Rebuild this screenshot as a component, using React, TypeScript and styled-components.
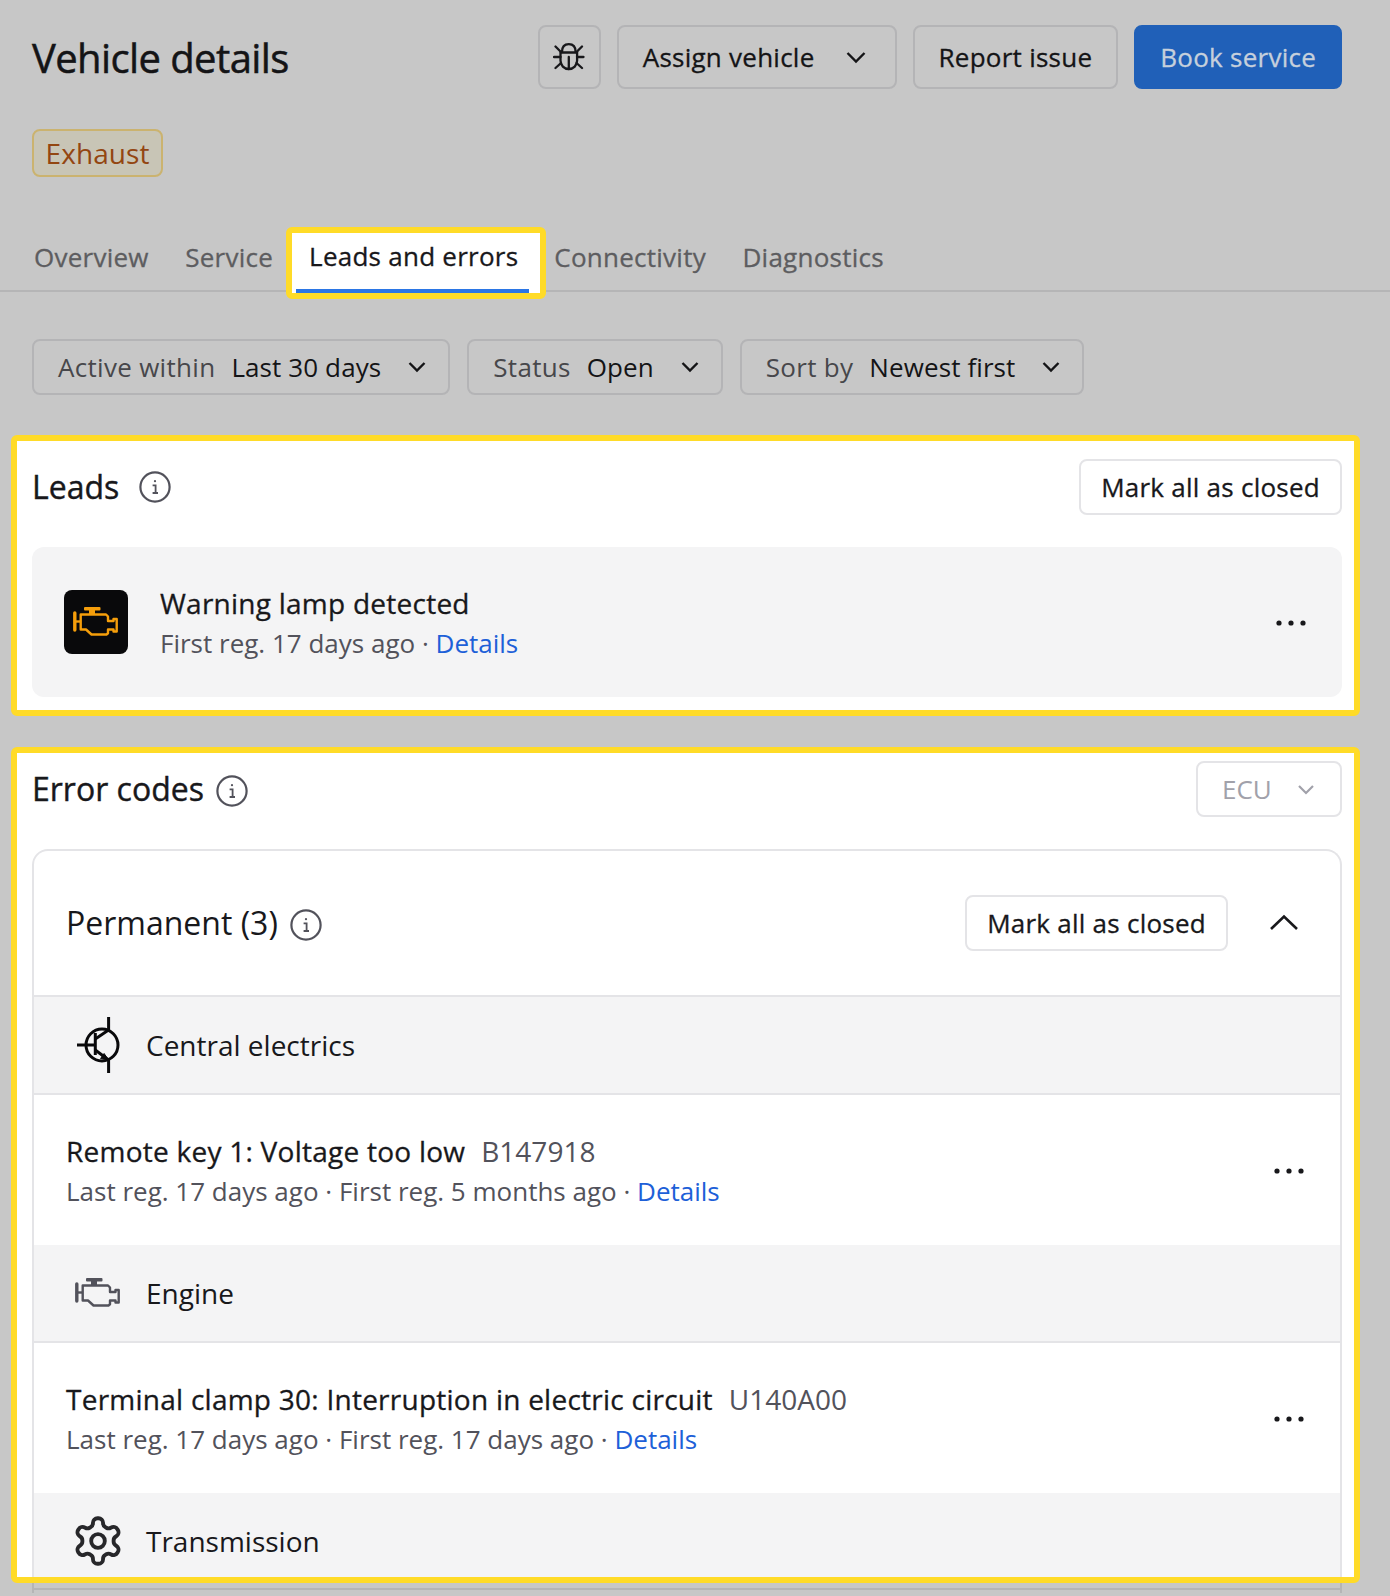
import styled, { createGlobalStyle, css } from "styled-components";

const GlobalStyle = createGlobalStyle`
  html, body {
    margin: 0;
    padding: 0;
    background: #c7c7c7;
    font-family: "Open Sans", "Liberation Sans", sans-serif;
    color: #18181b;
  }
  * { box-sizing: border-box; }
`;

// Open Sans has no medium cut here, so thicken the regular one a little
const medium = css`
  font-weight: 500;
  letter-spacing: 0.25px;
  -webkit-text-stroke: 0.3px;
`;

const Page = styled.div`
  width: 1390px;
  height: 1596px;
  overflow: hidden;
  display: flex;
  flex-direction: column;
`;

const PageHeader = styled.header`
  display: flex;
  align-items: center;
  justify-content: space-between;
  margin: 25px 48px 0 32px;
  height: 64px;
`;

const Title = styled.h1`
  margin: 0;
  font-size: 40px;
  font-weight: 500;
  letter-spacing: -0.6px;
  -webkit-text-stroke: 0.5px;
  color: #141416;
`;

const Actions = styled.div`
  display: flex;
  gap: 16px;
`;

const DimButton = styled.button`
  height: 64px;
  padding: 0 24px;
  display: flex;
  align-items: center;
  font: inherit;
  font-size: 26px;
  ${medium}
  color: #141416;
  background: transparent;
  border: 2px solid #b4b4b6;
  border-radius: 8px;
`;

const BugButton = styled(DimButton)`
  width: 63px;
  padding: 0;
  justify-content: center;
`;

const AssignButton = styled(DimButton)`
  gap: 31px;
  padding-right: 29px;
`;

const PrimaryButton = styled(DimButton)`
  background: #2060b8;
  border-color: #2060b8;
  color: #c6d0dc;
`;

const Tag = styled.span`
  align-self: flex-start;
  margin: 40px 0 0 32px;
  height: 48px;
  padding: 0 11.5px;
  display: flex;
  align-items: center;
  font-size: 28px;
  letter-spacing: 0.1px;
  color: #934611;
  background: #c8c5b6;
  border: 2px solid #cbb36f;
  border-radius: 8px;
`;

const TabBar = styled.nav`
  margin-top: 50px;
  height: 65px;
  display: flex;
  padding-left: 34px;
  border-bottom: 2px solid #b5b5b6;
`;

const Tab = styled.div`
  font-size: 26px;
  ${medium}
  line-height: 61px;
  margin-right: 36.5px;
  color: #5d5d60;
`;

const ActiveTab = styled.div`
  position: relative;
  height: 72px;
  margin: 0 8px 0 -23.5px;
  padding: 0 22px 0 17px;
  font-size: 26px;
  ${medium}
  line-height: 47px;
  color: #18181b;
  background: #fff;
  border: 6px solid #ffdb28;
  border-radius: 6px;
  &::after {
    content: "";
    position: absolute;
    left: 4px;
    right: 11px;
    bottom: 0;
    height: 4px;
    background: #2b76e5;
  }
`;

const Filters = styled.div`
  display: flex;
  gap: 17px;
  margin: 47px 0 0 32px;
`;

const FilterButton = styled(DimButton)`
  height: 56px;
  padding-right: 21px;
  font-weight: 400;
  letter-spacing: 0.1px;
  -webkit-text-stroke: 0;
`;

const FilterLabel = styled.span`
  color: #47474b;
  letter-spacing: 0.3px;
  margin-right: 16px;
`;

const FilterChevron = styled.svg`
  margin-left: 26px;
  width: 20px;
  height: 20px;
  fill: none;
  stroke: currentColor;
  stroke-width: 2.4;
`;

const Section = styled.section<{ $top: number; $height: number }>`
  margin: ${(p) => p.$top}px 30px 0 11px;
  height: ${(p) => p.$height}px;
  padding: 0 12px 0 15px;
  background: #fff;
  border: 6px solid #ffdb28;
  border-radius: 6px;
  overflow: hidden;
`;

const SectionHeader = styled.div<{ $height: number; $lift?: number }>`
  display: flex;
  align-items: center;
  justify-content: space-between;
  height: ${(p) => p.$height}px;
  padding-bottom: ${(p) => p.$lift ?? 0}px;
`;

const HeadingGroup = styled.div`
  display: flex;
  align-items: center;
`;

const Heading = styled.h2`
  margin: 0 0 2px;
  font-size: 32px;
  font-weight: 500;
  -webkit-text-stroke: 0.4px;
  color: #18181b;
`;

const SubHeading = styled.h3`
  margin: 0 0 2px;
  font-size: 32px;
  font-weight: 400;
  color: #18181b;
`;

const InfoIcon = styled.svg<{ $gap: number; $drop: number }>`
  margin-left: ${(p) => p.$gap}px;
  margin-top: ${(p) => p.$drop}px;
  width: 32px;
  height: 32px;
  fill: none;
  stroke: #52525b;
  flex: none;
`;

const OutlineButton = styled.button`
  height: 56px;
  padding: 0 20px;
  font: inherit;
  font-size: 26px;
  ${medium}
  color: #18181b;
  background: #fff;
  border: 2px solid #e4e4e7;
  border-radius: 8px;
`;

const LeadRow = styled.div`
  margin-top: 14px;
  height: 150px;
  padding: 2px 36px 0 32px;
  display: flex;
  align-items: center;
  background: #f4f4f5;
  border-radius: 12px;
`;

const LampBox = styled.div`
  width: 64px;
  height: 64px;
  flex: none;
  display: flex;
  align-items: center;
  justify-content: center;
  background: #09090b;
  border-radius: 8px;
  margin: -2px 32px 0 0;
`;

const RowText = styled.div`
  flex: 1;
  display: flex;
  flex-direction: column;
`;

const RowTitle = styled.div`
  font-size: 28px;
  ${medium}
  line-height: 40px;
  color: #18181b;
`;

const Code = styled.span`
  margin-left: 16px;
  font-weight: 400;
  letter-spacing: 0;
  -webkit-text-stroke: 0;
  color: #52525b;
`;

const RowMeta = styled.div`
  font-size: 26px;
  line-height: 40px;
  color: #52525b;
`;

const DetailsLink = styled.a`
  color: #1d60d8;
`;

const Dots = styled.svg`
  width: 30px;
  height: 6px;
  fill: #18181b;
  flex: none;
`;

const EcuSelect = styled.button`
  width: 146px;
  height: 56px;
  padding: 0 24px;
  display: flex;
  align-items: center;
  justify-content: space-between;
  font: inherit;
  font-size: 26px;
  color: #a1a1aa;
  background: #fff;
  border: 2px solid #e4e4e7;
  border-radius: 8px;
`;

const GroupCard = styled.div`
  border: 2px solid #e4e4e7;
  border-bottom: none;
  border-radius: 16px 16px 0 0;
`;

const GroupHeader = styled.div`
  display: flex;
  align-items: center;
  justify-content: space-between;
  height: 146px;
  padding: 0 41px 0 32px;
  border-bottom: 2px solid #e4e4e7;
`;

const GroupActions = styled.div`
  display: flex;
  align-items: center;
  gap: 41px;
`;

const SystemRow = styled.div<{ $height: number; $border?: boolean }>`
  display: flex;
  align-items: center;
  height: ${(p) => p.$height}px;
  background: #f4f4f5;
  font-size: 28px;
  color: #18181b;
  border-bottom: ${(p) => (p.$border ? "2px solid #e4e4e7" : "none")};
`;

const SystemIcon = styled.div<{ $pad: number }>`
  width: 112px;
  padding-left: ${(p) => p.$pad}px;
  flex: none;
  display: flex;
  align-items: center;
`;

const CodeRow = styled.div`
  height: 150px;
  padding: 2px 36px 0 32px;
  display: flex;
  align-items: center;
  background: #fff;
`;

const BottomStrip = styled.div`
  margin: 0 48px 0 32px;
  height: 10px;
  border-left: 2px solid #b5b5b6;
  border-right: 2px solid #b5b5b6;
  position: relative;
  &::after {
    content: "";
    position: absolute;
    left: 0;
    right: 0;
    top: 5px;
    height: 2px;
    background: #b5b5b6;
  }
`;

function Info({ gap, drop = 0 }: { gap: number; drop?: number }) {
  return (
    <InfoIcon $gap={gap} $drop={drop} viewBox="0 0 32 32" strokeWidth={2.2}>
      <circle cx="16" cy="16" r="14.6" />
      <path d="M13.6 14.4h3v7.6M13.6 22h5.4" strokeWidth={1.8} />
      <circle cx="16" cy="10.2" r="1.1" fill="#52525b" stroke="none" />
    </InfoIcon>
  );
}

function Chevron() {
  return (
    <FilterChevron viewBox="0 0 20 20">
      <path d="M2.5 6l7.5 7.5L17.5 6" />
    </FilterChevron>
  );
}

function MoreDots() {
  return (
    <Dots viewBox="0 0 30 6">
      <circle cx="3" cy="3" r="2.6" />
      <circle cx="15" cy="3" r="2.6" />
      <circle cx="27" cy="3" r="2.6" />
    </Dots>
  );
}

function EngineIcon({ color }: { color: string }) {
  return (
    <svg width="46" height="30" viewBox="0 0 46 30" fill="none" stroke={color} strokeWidth="2.4" strokeLinejoin="round">
      <rect x="11" y="0" width="16.5" height="3.4" rx="1" fill={color} stroke="none" />
      <rect x="16" y="3" width="6" height="4" fill={color} stroke="none" />
      <path d="M1.8 6v17" strokeWidth="3.4" strokeLinecap="round" />
      <path d="M2 14.5h6" />
      <path d="M7.7 7.5H33l2 2v4.5h5.5v-2h3.2v12.5h-3.2v-2H35v3.8l-1.5 1.2H18.5l-5.5-5H7.7z" />
    </svg>
  );
}

export default function App() {
  return (
    <Page>
      <GlobalStyle />
      <PageHeader>
        <Title>Vehicle details</Title>
        <Actions>
          <BugButton aria-label="Debug">
            <svg width="32" height="28" viewBox="0 0 32 28" fill="none" stroke="#18181b" strokeWidth="2.3" strokeLinecap="round">
              <path d="M9 9C9 3.5 12 1.2 15.8 1.2s6.8 2.3 6.8 7.8" />
              <path d="M7.5 9.5h16.6v8c0 5-3.5 8.5-8.3 8.5s-8.3-3.5-8.3-8.5z" />
              <path d="M15.8 14v12M2.5 3.5 8 9M29 3.5 23.5 9M1 14h6.5M24 14h6.5M2.5 25 8 20M29 25l-5.5-5" />
            </svg>
          </BugButton>
          <AssignButton>
            Assign vehicle
            <svg width="20" height="20" viewBox="0 0 20 20" fill="none" stroke="currentColor" strokeWidth="2.4">
              <path d="M1.5 6l8.5 8.5L18.5 6" />
            </svg>
          </AssignButton>
          <DimButton>Report issue</DimButton>
          <PrimaryButton>Book service</PrimaryButton>
        </Actions>
      </PageHeader>

      <Tag>Exhaust</Tag>

      <TabBar>
        <Tab>Overview</Tab>
        <Tab>Service</Tab>
        <ActiveTab>Leads and errors</ActiveTab>
        <Tab>Connectivity</Tab>
        <Tab>Diagnostics</Tab>
      </TabBar>

      <Filters>
        <FilterButton>
          <FilterLabel>Active within</FilterLabel>Last 30 days
          <Chevron />
        </FilterButton>
        <FilterButton>
          <FilterLabel>Status</FilterLabel>Open
          <Chevron />
        </FilterButton>
        <FilterButton>
          <FilterLabel>Sort by</FilterLabel>Newest first
          <Chevron />
        </FilterButton>
      </Filters>

      <Section $top={40} $height={281}>
        <SectionHeader $height={92}>
          <HeadingGroup>
            <Heading>Leads</Heading>
            <Info gap={20} />
          </HeadingGroup>
          <OutlineButton>Mark all as closed</OutlineButton>
        </SectionHeader>
        <LeadRow>
          <LampBox>
            <EngineIcon color="#f59e0b" />
          </LampBox>
          <RowText>
            <RowTitle>Warning lamp detected</RowTitle>
            <RowMeta>
              First reg. 17 days ago · <DetailsLink>Details</DetailsLink>
            </RowMeta>
          </RowText>
          <MoreDots />
        </LeadRow>
      </Section>

      <Section $top={31} $height={836}>
        <SectionHeader $height={96} $lift={24}>
          <HeadingGroup>
            <Heading>Error codes</Heading>
            <Info gap={12} drop={3} />
          </HeadingGroup>
          <EcuSelect>
            ECU
            <svg width="20" height="20" viewBox="0 0 20 20" fill="none" stroke="#a1a1aa" strokeWidth="2.2">
              <path d="M3 7l7 7 7-7" />
            </svg>
          </EcuSelect>
        </SectionHeader>

        <GroupCard>
          <GroupHeader>
            <HeadingGroup>
              <SubHeading>Permanent (3)</SubHeading>
              <Info gap={12} drop={4} />
            </HeadingGroup>
            <GroupActions>
              <OutlineButton>Mark all as closed</OutlineButton>
              <svg width="30" height="20" viewBox="0 0 30 20" fill="none" stroke="#18181b" strokeWidth="2.6">
                <path d="M2 16 15 3.5 28 16" />
              </svg>
            </GroupActions>
          </GroupHeader>

          <SystemRow $height={98} $border>
            <SystemIcon $pad={43}>
              <svg width="44" height="56" viewBox="0 0 44 56" fill="none" stroke="#09090b" strokeWidth="3">
                <circle cx="25" cy="28" r="16" />
                <path d="M0 28h18.3M18.3 16v22" />
                <path d="M18.3 22 31.6 13V0M18.3 33l13.3 10v13" />
                <path d="M31.6 43l-8-1.5 3.5-5z" fill="#09090b" strokeWidth="1" />
              </svg>
            </SystemIcon>
            Central electrics
          </SystemRow>

          <CodeRow>
            <RowText>
              <RowTitle>
                Remote key 1: Voltage too low<Code>B147918</Code>
              </RowTitle>
              <RowMeta>
                Last reg. 17 days ago · First reg. 5 months ago · <DetailsLink>Details</DetailsLink>
              </RowMeta>
            </RowText>
            <MoreDots />
          </CodeRow>

          <SystemRow $height={98} $border>
            <SystemIcon $pad={41}>
              <EngineIcon color="#52525b" />
            </SystemIcon>
            Engine
          </SystemRow>

          <CodeRow>
            <RowText>
              <RowTitle>
                Terminal clamp 30: Interruption in electric circuit<Code>U140A00</Code>
              </RowTitle>
              <RowMeta>
                Last reg. 17 days ago · First reg. 17 days ago · <DetailsLink>Details</DetailsLink>
              </RowMeta>
            </RowText>
            <MoreDots />
          </CodeRow>

          <SystemRow $height={96}>
            <SystemIcon $pad={39}>
              <svg width="50" height="50" viewBox="1 1 22 22" fill="none" stroke="#27272a" strokeWidth="1.7" strokeLinejoin="round">
                <path d="M12.22 2h-.44a2 2 0 0 0-2 2v.18a2 2 0 0 1-1 1.73l-.43.25a2 2 0 0 1-2 0l-.15-.08a2 2 0 0 0-2.73.73l-.22.38a2 2 0 0 0 .73 2.73l.15.1a2 2 0 0 1 1 1.72v.51a2 2 0 0 1-1 1.74l-.15.09a2 2 0 0 0-.73 2.73l.22.38a2 2 0 0 0 2.73.73l.15-.08a2 2 0 0 1 2 0l.43.25a2 2 0 0 1 1 1.73V20a2 2 0 0 0 2 2h.44a2 2 0 0 0 2-2v-.18a2 2 0 0 1 1-1.73l.43-.25a2 2 0 0 1 2 0l.15.08a2 2 0 0 0 2.73-.73l.22-.39a2 2 0 0 0-.73-2.73l-.15-.08a2 2 0 0 1-1-1.74v-.5a2 2 0 0 1 1-1.74l.15-.09a2 2 0 0 0 .73-2.73l-.22-.38a2 2 0 0 0-2.73-.73l-.15.08a2 2 0 0 1-2 0l-.43-.25a2 2 0 0 1-1-1.73V4a2 2 0 0 0-2-2z" />
                <circle cx="12" cy="12" r="3" />
              </svg>
            </SystemIcon>
            Transmission
          </SystemRow>
        </GroupCard>
      </Section>
      <BottomStrip />
    </Page>
  );
}
